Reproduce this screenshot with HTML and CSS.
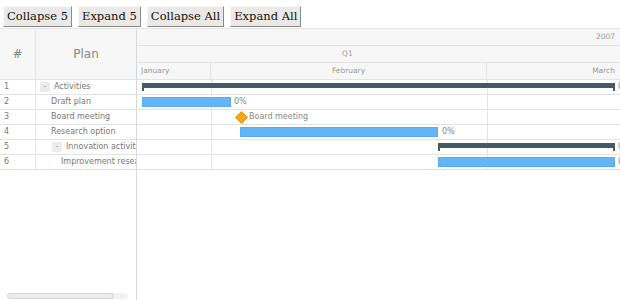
FILE: index.html
```html
<!DOCTYPE html>
<html>
<head>
<meta charset="utf-8">
<link rel="stylesheet" href="styles.css">
</head>
<body>
<div class="toolbar">
  <button class="btn">Collapse 5</button>
  <button class="btn">Expand 5</button>
  <button class="btn">Collapse All</button>
  <button class="btn">Expand All</button>
</div>
<div class="chart">
  <div class="grid">
    <div class="grid-head">
      <div class="col-num hcell">#</div>
      <div class="col-plan hcell">Plan</div>
    </div>
    <div class="grow"><div class="col-num">1</div><div class="col-plan"><span class="tog">-</span>Activities</div></div>
    <div class="grow"><div class="col-num">2</div><div class="col-plan lvl1">Draft plan</div></div>
    <div class="grow"><div class="col-num">3</div><div class="col-plan lvl1">Board meeting</div></div>
    <div class="grow"><div class="col-num">4</div><div class="col-plan lvl1">Research option</div></div>
    <div class="grow"><div class="col-num">5</div><div class="col-plan lvl1b"><span class="tog">-</span>Innovation activities</div></div>
    <div class="grow"><div class="col-num">6</div><div class="col-plan lvl2">Improvement research</div></div>
    <div class="grid-fill">
      <div class="hscroll"><div class="hthumb"></div></div>
    </div>
  </div>
  <div class="timeline">
    <div class="trow trow-year"><span class="year">2007</span></div>
    <div class="trow trow-q"><span class="q">Q1</span></div>
    <div class="trow trow-m">
      <div class="mcell m-jan">January</div>
      <div class="mcell m-feb">February</div>
      <div class="mcell m-mar">March</div>
    </div>
    <div class="tbody">
      <div class="vline" style="left:74px"></div>
      <div class="vline" style="left:350px"></div>
      <div class="brow">
        <div class="summary" style="left:5px;width:473px"></div>
        <span class="blabel" style="left:481px">0%</span>
      </div>
      <div class="brow">
        <div class="task" style="left:5px;width:89px"></div>
        <span class="blabel" style="left:97px">0%</span>
      </div>
      <div class="brow">
        <div class="milestone" style="left:100px"></div>
        <span class="blabel" style="left:112px">Board meeting</span>
      </div>
      <div class="brow">
        <div class="task" style="left:103px;width:198px"></div>
        <span class="blabel" style="left:305px">0%</span>
      </div>
      <div class="brow">
        <div class="summary" style="left:301px;width:177px"></div>
        <span class="blabel" style="left:481px">0%</span>
      </div>
      <div class="brow">
        <div class="task" style="left:301px;width:177px"></div>
        <span class="blabel" style="left:481px">0%</span>
      </div>
    </div>
  </div>
</div>
</body>
</html>
```

FILE: styles.css
```css
html, body {
  margin: 0;
  padding: 0;
  background: #fff;
  overflow: hidden;
}
body {
  width: 620px;
  height: 300px;
}
.toolbar {
  display: flex;
  gap: 6px;
  padding: 6px 3px 1px 3px;
  height: 21px;
}
.btn {
  font-family: "DejaVu Serif", serif;
  font-size: 11.5px;
  color: #111;
  background: #ebe9e5;
  border: 1px solid;
  border-color: #f8f8f8 #8a8a8a #8a8a8a #f8f8f8;
  padding: 0 3px;
  height: 21px;
  margin: 0;
  line-height: 19px;
}
.chart {
  display: flex;
  height: 272px;
  border-top: 1px solid #e6e6e6;
  font-family: "DejaVu Sans", sans-serif;
  color: #777;
}
.grid {
  width: 136px;
  border-right: 1px solid #d8d8d8;
  display: flex;
  flex-direction: column;
  overflow: hidden;
  flex: none;
}
.grid-head {
  display: flex;
  height: 50px;
  background: #f7f7f7;
  border-bottom: 1px solid #e3e3e3;
}
.hcell {
  display: flex;
  align-items: center;
  justify-content: center;
  font-size: 12px;
  color: #888;
}
.col-num {
  width: 36px;
  box-sizing: border-box;
  border-right: 1px solid #e3e3e3;
  flex: none;
}
.col-plan {
  flex: 1;
  min-width: 0;
  white-space: nowrap;
  overflow: hidden;
}
.grow {
  display: flex;
  height: 14px;
  border-bottom: 1px solid #e3e3e3;
  font-size: 8px;
  line-height: 14px;
}
.grow .col-num {
  padding-left: 4px;
}
.grow .col-plan {
  padding-left: 4px;
  display: flex;
  align-items: center;
}
.grow .lvl1 { padding-left: 15px; }
.grow .lvl1b { padding-left: 16px; }
.grow .lvl2 { padding-left: 25px; }
.tog {
  flex: none;
  display: inline-block;
  width: 10px;
  height: 10px;
  background: #ececec;
  border-radius: 1px;
  font-size: 8px;
  line-height: 9px;
  text-align: center;
  margin-right: 4px;
  color: #999;
}
.grid-fill {
  flex: 1;
  display: flex;
  align-items: flex-end;
  padding: 0 0 2px 7px;
}
.hscroll {
  width: 121px;
  height: 6px;
  border-radius: 3px;
  background: #f2f2f2;
}
.hthumb {
  width: 105px;
  height: 4px;
  border: 1px solid #d6d6d6;
  border-radius: 3px;
  background: #ececec;
}
.timeline {
  flex: 1;
  display: flex;
  flex-direction: column;
  overflow: hidden;
}
.trow {
  height: 16px;
  background: #f7f7f7;
  border-bottom: 1px solid #e3e3e3;
  font-size: 7.5px;
  line-height: 16px;
  color: #999;
  display: flex;
}
.trow-year { justify-content: flex-end; padding-right: 5px; }
.trow-q { padding-left: 205px; }
.mcell {
  box-sizing: border-box;
  height: 16px;
  overflow: hidden;
  white-space: nowrap;
}
.m-jan { width: 74px; padding-left: 4px; border-right: 1px solid #e3e3e3; }
.m-feb { width: 276px; text-align: center; border-right: 1px solid #e3e3e3; }
.m-mar { flex: 1; text-align: right; padding-right: 5px; }
.tbody {
  position: relative;
  display: flex;
  flex-direction: column;
}
.vline {
  position: absolute;
  top: 0;
  height: 90px;
  width: 1px;
  background: #e3e3e3;
}
.brow {
  position: relative;
  height: 14px;
  border-bottom: 1px solid #e3e3e3;
}
.task {
  position: absolute;
  top: 2px;
  height: 10px;
  background: #64b5f6;
  box-sizing: border-box;
  border: 1px solid #5aaef0;
}
.summary {
  position: absolute;
  top: 3px;
  height: 5px;
  background: #455a64;
}
.summary::before, .summary::after {
  content: "";
  position: absolute;
  top: 4px;
  width: 2px;
  height: 4px;
  background: #455a64;
}
.summary::before { left: 0; }
.summary::after { right: 0; }
.milestone {
  position: absolute;
  top: 3px;
  width: 7px;
  height: 7px;
  background: #f5a623;
  border: 1px solid #e89a10;
  transform: rotate(45deg);
}
.blabel {
  position: absolute;
  top: 0;
  font-size: 8px;
  line-height: 14px;
  color: #888;
  white-space: nowrap;
}
```
